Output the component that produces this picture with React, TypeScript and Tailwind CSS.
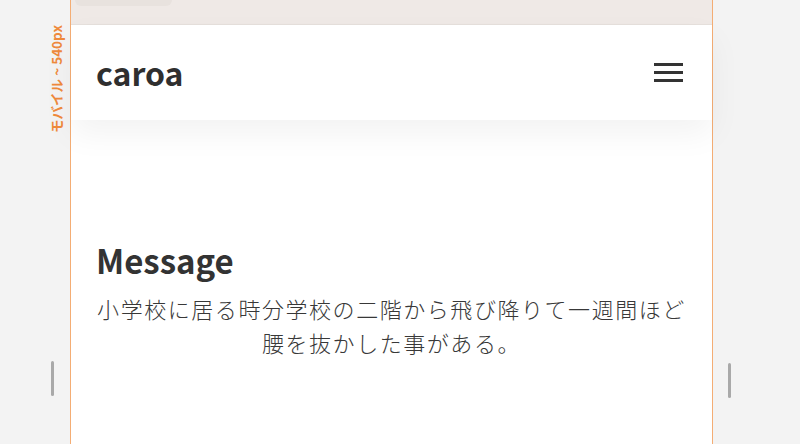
import React from "react";

export default function App() {
  return (
    <div className="flex h-[444px] w-[800px] overflow-hidden bg-[#f3f3f3] [font-family:'Noto_Sans_CJK_JP','Noto_Sans',sans-serif]">
      {/* left gutter */}
      <div className="flex w-[70px] shrink-0 flex-col items-end pr-[8px]">
        <div className="mt-[25px] -mr-[1px] text-[13.5px] font-bold leading-[14px] text-[#ef8a3c] [writing-mode:vertical-rl] [text-orientation:sideways] rotate-180 whitespace-nowrap">
          モバイル ~ 540px
        </div>
        <div className="mt-[228px] mr-[8px] h-[35px] w-[3px] rounded-full bg-[#a9a9a9]" />
      </div>

      {/* frame */}
      <div className="flex w-[643px] shrink-0 flex-col border-x border-[#f4ad74] bg-white">
        <div className="h-[25px] shrink-0 border-b border-[#e6e0dc] bg-[#efe9e6] pl-[4px]">
          <div className="h-[6px] w-[97px] rounded-b-[10px] bg-[#e8e2de]" />
        </div>
        <header className="relative z-10 flex h-[95px] shrink-0 items-center justify-between bg-white px-[25px] shadow-[0_14px_30px_rgba(0,0,0,0.05)]">
          <div className="text-[32px] font-bold leading-none text-[#2f2f2f] -mt-[1px]">caroa</div>
          <div className="mr-[4px] flex w-[29px] flex-col gap-[5px]">
            <span className="block h-[3px] w-full bg-[#333]" />
            <span className="block h-[3px] w-full bg-[#333]" />
            <span className="block h-[3px] w-full bg-[#333]" />
          </div>
        </header>
        <main className="px-[25px] pt-[118px]">
          <h2 className="text-[33px] font-bold leading-[44px] text-[#333]">Message</h2>
          <p className="mt-[9px] text-center text-[22px] font-light leading-[34px] tracking-[1.55px] text-[#383838]">
            小学校に居る時分学校の二階から飛び降りて一週間ほど腰を抜かした事がある。
          </p>
        </main>
      </div>

      {/* right gutter */}
      <div className="flex flex-1 flex-col pl-[15px]">
        <div className="mt-[363px] h-[35px] w-[3px] rounded-full bg-[#a9a9a9]" />
      </div>
    </div>
  );
}
